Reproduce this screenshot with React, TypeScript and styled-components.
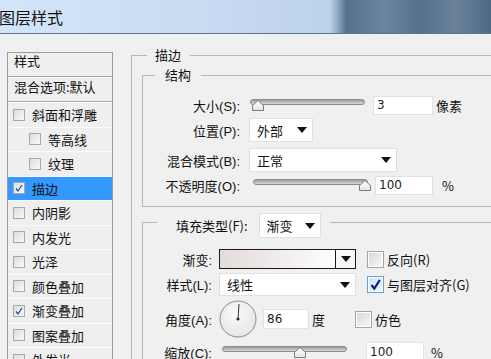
import React from "react";
import styled, { createGlobalStyle } from "styled-components";

const GlobalStyle = createGlobalStyle`
  html, body {
    margin: 0;
    padding: 0;
    background: #f0f0f0;
    overflow: hidden;
  }
  body {
    font-family: "Liberation Sans", "Noto Sans CJK SC", sans-serif;
    font-size: 13px;
    color: #111;
  }
`;

const Window = styled.div`
  width: 491px;
  height: 359px;
  overflow: hidden;
  background: #f0f0f0;
`;

const TitleBar = styled.div`
  height: 33px;
  border-bottom: 1px solid #66727e;
  display: flex;
  align-items: center;
  background: linear-gradient(
    to right,
    #d3e5f8 0px,
    #c8dcf2 200px,
    #bcd2eb 330px,
    #8fa8c1 338px,
    #55708b 346px,
    #6c859e 385px,
    #53708c 420px,
    #6a839b 455px,
    #4f6983 491px
  );
`;

const Title = styled.span`
  margin-left: -1px;
  font-family: "Noto Sans CJK SC", sans-serif;
  font-size: 16px;
  color: #111;
`;

const Body = styled.div`
  display: flex;
  align-items: flex-start;
`;

/* ---------- left style list ---------- */

const Sidebar = styled.div`
  flex: none;
  margin: 18px 0 0 7px;
  width: 104px;
  height: 330px;
  overflow: hidden;
  border: 1px solid #9c9c9c;
  background: #efefef;
  font-family: "Noto Sans CJK SC", sans-serif;
`;

const HeaderRow = styled.div<{ $h: number; $pt: number }>`
  height: ${(p) => p.$h}px;
  box-sizing: border-box;
  padding: ${(p) => p.$pt}px 0 0 6px;
  line-height: 16px;
  border-bottom: 1px solid #a9a9a9;
  box-shadow: 0 1px 0 #ffffff;
  margin-bottom: 1px;
  white-space: nowrap;
`;

const Item = styled.div<{ $indent?: boolean; $selected?: boolean }>`
  height: 24.5px;
  box-sizing: border-box;
  display: flex;
  align-items: center;
  gap: 7px;
  padding-left: ${(p) => (p.$indent ? 21 : 5)}px;
  border-bottom: 1px solid #fbfbfb;
  background: ${(p) => (p.$selected ? "#3399ff" : "transparent")};
  white-space: nowrap;
`;

const SmallBox = styled.span`
  width: 12px;
  height: 12px;
  box-sizing: border-box;
  border: 1px solid #a8a8a8;
  background: linear-gradient(135deg, #dcdcdc, #fafafa);
  display: flex;
  align-items: center;
  justify-content: center;
  flex: none;
`;

function SmallCheck({ checked }: { checked?: boolean }) {
  return (
    <SmallBox>
      {checked && (
        <svg width="10" height="10" viewBox="0 0 10 10">
          <path d="M2 5.5 L4 8 L8 2" fill="none" stroke="#2b4ba3" strokeWidth="1.3" />
        </svg>
      )}
    </SmallBox>
  );
}

/* ---------- right settings ---------- */

const Content = styled.div`
  flex: none;
  margin: 13px 0 0 18px;
  font-family: "Liberation Sans", "Noto Sans CJK SC", sans-serif;
`;

const Group = styled.fieldset<{ $w: number; $mt?: number }>`
  margin: ${(p) => p.$mt ?? 0}px 0 0 0;
  padding: 0;
  min-width: 0;
  width: ${(p) => p.$w}px;
  box-sizing: border-box;
  border: 1px solid #b7b7b7;
`;

const Caption = styled.legend<{ $ml: number; $pl: number; $pr: number; $pt?: number }>`
  margin-left: ${(p) => p.$ml}px;
  padding: ${(p) => p.$pt ?? 0}px ${(p) => p.$pr}px 0 ${(p) => p.$pl}px;
  line-height: 16px;
  font-family: "Noto Sans CJK SC", sans-serif;
`;

const CaptionInner = styled.div`
  display: flex;
  align-items: center;
  gap: 11px;
`;

const GroupBody = styled.div<{ $pt: number; $pb: number; $pl: number }>`
  padding: ${(p) => p.$pt}px 0 ${(p) => p.$pb}px ${(p) => p.$pl}px;
`;

const Row = styled.div<{ $h: number; $mt?: number }>`
  display: flex;
  align-items: center;
  height: ${(p) => p.$h}px;
  margin-top: ${(p) => p.$mt ?? 0}px;
  white-space: nowrap;
`;

const Label = styled.span<{ $w: number; $gap: number }>`
  width: ${(p) => p.$w}px;
  margin-right: ${(p) => p.$gap}px;
  text-align: right;
  flex: none;
`;

const Text = styled.span<{ $ml?: number }>`
  margin-left: ${(p) => p.$ml ?? 0}px;
  font-family: "Noto Sans CJK SC", sans-serif;
`;

const Field = styled.div<{ $w: number; $h: number; $ml?: number }>`
  width: ${(p) => p.$w}px;
  height: ${(p) => p.$h}px;
  margin-left: ${(p) => p.$ml ?? 0}px;
  box-sizing: border-box;
  background: #fff;
  border: 1px solid #e2e2e2;
  padding-left: 3px;
  display: flex;
  align-items: center;
  font-family: "DejaVu Sans", sans-serif;
  font-size: 12px;
  color: #222;
  flex: none;
`;

const Select = styled.div<{ $w: number; $h: number }>`
  width: ${(p) => p.$w}px;
  height: ${(p) => p.$h}px;
  box-sizing: border-box;
  background: #fff;
  border: 1px solid #e0e0e0;
  padding: 0 5px 0 7px;
  display: flex;
  align-items: center;
  justify-content: space-between;
  font-family: "Noto Sans CJK SC", sans-serif;
  flex: none;
`;

function Arrow() {
  return (
    <svg width="10" height="6" viewBox="0 0 10 6">
      <polygon points="0,0 10,0 5,6" fill="#111" />
    </svg>
  );
}

function Dropdown({ value, w, h }: { value: string; w: number; h: number }) {
  return (
    <Select $w={w} $h={h}>
      <span>{value}</span>
      <Arrow />
    </Select>
  );
}

const SliderWrap = styled.div<{ $w: number; $ml?: number }>`
  position: relative;
  width: ${(p) => p.$w}px;
  height: 14px;
  margin-left: ${(p) => p.$ml ?? 0}px;
  margin-top: -3px;
  flex: none;
`;

const Track = styled.div`
  height: 4px;
  margin-top: 2px;
  border: 1px solid #8d8d8d;
  border-radius: 3px;
  background: linear-gradient(#9a9a9a, #d9d9d9);
`;

const Thumb = styled.svg<{ $left: number }>`
  position: absolute;
  top: 3px;
  left: ${(p) => p.$left}px;
`;

function Slider({ w, ml, pos }: { w: number; ml?: number; pos: number }) {
  return (
    <SliderWrap $w={w} $ml={ml}>
      <Track />
      <Thumb $left={pos} width="12" height="11" viewBox="0 0 12 11">
        <defs>
          <linearGradient id="thumbFill" x1="0" y1="0" x2="0" y2="1">
            <stop offset="0" stopColor="#ffffff" />
            <stop offset="1" stopColor="#e4e4e4" />
          </linearGradient>
        </defs>
        <polygon points="6,0.5 11.5,5.5 11.5,10.5 0.5,10.5 0.5,5.5" fill="url(#thumbFill)" stroke="#7b7b7b" />
      </Thumb>
    </SliderWrap>
  );
}

const GradientBox = styled.div`
  width: 137px;
  height: 20px;
  box-sizing: border-box;
  border: 1px solid #1b1b1b;
  display: flex;
  flex: none;
`;

const GradientFill = styled.div`
  flex: 1;
  background: linear-gradient(to right, #e3dcda, #f3efee 60%, #fefefe);
  border-right: 1px solid #1b1b1b;
`;

const GradientArrow = styled.div`
  width: 19px;
  display: flex;
  align-items: center;
  justify-content: center;
  background: #f7f7f7;
`;

const BigBox = styled.span<{ $checked?: boolean; $ml: number }>`
  width: 17px;
  height: 17px;
  margin-left: ${(p) => p.$ml}px;
  box-sizing: border-box;
  border: 1px solid ${(p) => (p.$checked ? "#6c9fd3" : "#a3a3a3")};
  background: ${(p) =>
    p.$checked
      ? "linear-gradient(135deg, #cfe3f7, #eef6fd)"
      : "linear-gradient(135deg, #d6d6d6, #f9f9f9)"};
  box-shadow: inset 0 0 0 1px #ffffff;
  display: flex;
  align-items: center;
  justify-content: center;
  flex: none;
`;

function BigCheck({ checked, ml }: { checked?: boolean; ml: number }) {
  return (
    <BigBox $checked={checked} $ml={ml}>
      {checked && (
        <svg width="13" height="13" viewBox="0 0 13 13">
          <path d="M2.5 7 L5.3 10.5 L10.8 2" fill="none" stroke="#0d1f86" strokeWidth="2.2" />
        </svg>
      )}
    </BigBox>
  );
}

function Dial({ angle }: { angle: number }) {
  const rad = (angle * Math.PI) / 180;
  const x = 19 + 15 * Math.cos(rad);
  const y = 19 - 15 * Math.sin(rad);
  return (
    <svg width="38" height="38" viewBox="0 0 38 38">
      <defs>
        <radialGradient id="dialFill" cx="0.45" cy="0.4" r="0.6">
          <stop offset="0" stopColor="#fbfbfb" />
          <stop offset="1" stopColor="#e6e6e6" />
        </radialGradient>
      </defs>
      <circle cx="19" cy="19" r="18" fill="url(#dialFill)" stroke="#8c8c8c" />
      <line x1="19" y1="19" x2={x} y2={y} stroke="#333" strokeWidth="1" />
      <circle cx="19" cy="19" r="1.6" fill="#333" />
    </svg>
  );
}

const styleItems = [
  { name: "斜面和浮雕" },
  { name: "等高线", indent: true },
  { name: "纹理", indent: true },
  { name: "描边", checked: true, selected: true },
  { name: "内阴影" },
  { name: "内发光" },
  { name: "光泽" },
  { name: "颜色叠加" },
  { name: "渐变叠加", checked: true },
  { name: "图案叠加" },
  { name: "外发光" },
  { name: "投影" },
];

export default function App() {
  return (
    <Window>
      <GlobalStyle />
      <TitleBar>
        <Title>图层样式</Title>
      </TitleBar>
      <Body>
        <Sidebar>
          <HeaderRow $h={24} $pt={0}>样式</HeaderRow>
          <HeaderRow $h={24} $pt={1}>混合选项:默认</HeaderRow>
          {styleItems.map((item) => (
            <Item key={item.name} $indent={item.indent} $selected={item.selected}>
              <SmallCheck checked={item.checked} />
              <span>{item.name}</span>
            </Item>
          ))}
        </Sidebar>

        <Content>
          <Group $w={400}>
            <Caption $ml={15} $pl={8} $pr={9}>描边</Caption>
            <GroupBody $pt={4} $pb={0} $pl={10}>
              <Group $w={400}>
                <Caption $ml={12} $pl={10} $pr={10}>结构</Caption>
                <GroupBody $pt={10} $pb={9} $pl={0}>
                  <Row $h={24}>
                    <Label $w={97} $gap={9}>大小(S):</Label>
                    <Slider w={115} ml={1} pos={2} />
                    <Field $w={60} $h={19} $ml={8}>3</Field>
                    <Text $ml={3}>像素</Text>
                  </Row>
                  <Row $h={24} $mt={1}>
                    <Label $w={97} $gap={9}>位置(P):</Label>
                    <Dropdown value="外部" w={64} h={24} />
                  </Row>
                  <Row $h={24} $mt={6}>
                    <Label $w={97} $gap={9}>混合模式(B):</Label>
                    <Dropdown value="正常" w={148} h={24} />
                  </Row>
                  <Row $h={24} $mt={1}>
                    <Label $w={97} $gap={9}>不透明度(O):</Label>
                    <Slider w={115} ml={4} pos={106} />
                    <Field $w={58} $h={19} $ml={7}>100</Field>
                    <Text $ml={9}>%</Text>
                  </Row>
                </GroupBody>
              </Group>

              <Group $w={400} $mt={-1}>
                <Caption $ml={14} $pl={19} $pr={9} $pt={7}>
                  <CaptionInner>
                    <span>填充类型(F):</span>
                    <Dropdown value="渐变" w={62} h={25} />
                  </CaptionInner>
                </Caption>
                <GroupBody $pt={11} $pb={0} $pl={0}>
                  <Row $h={20}>
                    <Label $w={69} $gap={7}>渐变:</Label>
                    <GradientBox>
                      <GradientFill />
                      <GradientArrow>
                        <Arrow />
                      </GradientArrow>
                    </GradientBox>
                    <BigCheck ml={11} />
                    <Text $ml={3}>反向(R)</Text>
                  </Row>
                  <Row $h={23} $mt={4}>
                    <Label $w={69} $gap={7}>样式(L):</Label>
                    <Dropdown value="线性" w={137} h={23} />
                    <BigCheck checked ml={11} />
                    <Text $ml={3}>与图层对齐(G)</Text>
                  </Row>
                  <Row $h={38} $mt={4}>
                    <Label $w={69} $gap={7}>角度(A):</Label>
                    <Dial angle={86} />
                    <Field $w={46} $h={20} $ml={6}>86</Field>
                    <Text $ml={3}>度</Text>
                    <BigCheck ml={30} />
                    <Text $ml={3}>仿色</Text>
                  </Row>
                  <Row $h={22} $mt={3}>
                    <Label $w={69} $gap={7}>缩放(C):</Label>
                    <Slider w={125} ml={3} pos={72} />
                    <Field $w={58} $h={21} $ml={19}>100</Field>
                    <Text $ml={7}>%</Text>
                  </Row>
                </GroupBody>
              </Group>
            </GroupBody>
          </Group>
        </Content>
      </Body>
    </Window>
  );
}
